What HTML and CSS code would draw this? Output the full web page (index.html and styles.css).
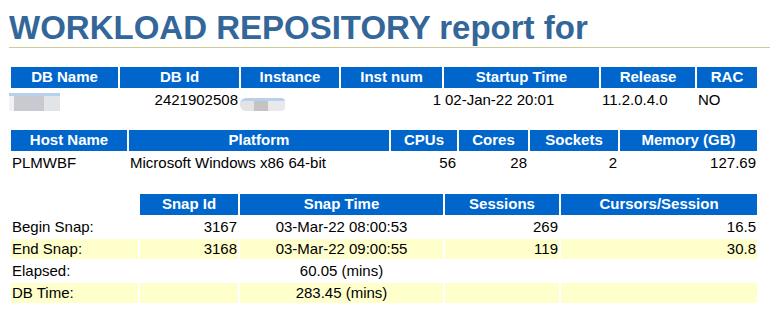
FILE: index.html
```html
<!DOCTYPE html>
<html>
<head>
  <meta charset="utf-8" />
  <title>AWR Report</title>
  <link rel="stylesheet" href="styles.css">
</head>
<body class="awr">

  <h1 class="awr">WORKLOAD REPOSITORY report for</h1>

  <table class="tdiff info">
    <tr>
      <th class="awrbg c-dbname">DB Name</th>
      <th class="awrbg c-dbid">DB Id</th>
      <th class="awrbg c-inst">Instance</th>
      <th class="awrbg c-instnum">Inst num</th>
      <th class="awrbg c-startup">Startup Time</th>
      <th class="awrbg c-release">Release</th>
      <th class="awrbg c-rac">RAC</th>
    </tr>
    <tr>
      <td class="awrnc"><span class="redact redact-db"><i></i><i></i><i></i></span>&nbsp;</td>
      <td class="awrnc num">2421902508</td>
      <td class="awrnc"><span class="redact redact-inst"><i></i><i></i><i></i></span>&nbsp;</td>
      <td class="awrnc num">1</td>
      <td class="awrnc">02-Jan-22 20:01</td>
      <td class="awrnc">11.2.0.4.0</td>
      <td class="awrnc">NO</td>
    </tr>
  </table>

  <table class="tdiff host">
    <tr>
      <th class="awrbg c-host">Host Name</th>
      <th class="awrbg c-platform">Platform</th>
      <th class="awrbg c-cpus">CPUs</th>
      <th class="awrbg c-cores">Cores</th>
      <th class="awrbg c-sockets">Sockets</th>
      <th class="awrbg c-memory">Memory (GB)</th>
    </tr>
    <tr>
      <td class="awrnc">PLMWBF</td>
      <td class="awrnc">Microsoft Windows x86 64-bit</td>
      <td class="awrnc num">56</td>
      <td class="awrnc num">28</td>
      <td class="awrnc num">2</td>
      <td class="awrnc num">127.69</td>
    </tr>
  </table>

  <table class="tdiff snaps">
    <tr>
      <th class="c-label"></th>
      <th class="awrbg c-snapid">Snap Id</th>
      <th class="awrbg c-snaptime">Snap Time</th>
      <th class="awrbg c-sessions">Sessions</th>
      <th class="awrbg c-cursors">Cursors/Session</th>
    </tr>
    <tr>
      <td class="awrnc">Begin Snap:</td>
      <td class="awrnc num">3167</td>
      <td class="awrnc mid">03-Mar-22 08:00:53</td>
      <td class="awrnc num">269</td>
      <td class="awrnc num">16.5</td>
    </tr>
    <tr>
      <td class="awrc">End Snap:</td>
      <td class="awrc num">3168</td>
      <td class="awrc mid">03-Mar-22 09:00:55</td>
      <td class="awrc num">119</td>
      <td class="awrc num">30.8</td>
    </tr>
    <tr>
      <td class="awrnc">Elapsed:</td>
      <td class="awrnc"></td>
      <td class="awrnc mid">60.05 (mins)</td>
      <td class="awrnc"></td>
      <td class="awrnc"></td>
    </tr>
    <tr>
      <td class="awrc">DB Time:</td>
      <td class="awrc"></td>
      <td class="awrc mid">283.45 (mins)</td>
      <td class="awrc"></td>
      <td class="awrc"></td>
    </tr>
  </table>

</body>
</html>
```

FILE: styles.css
```css
* {
  box-sizing: border-box;
}

body.awr {
  margin: 9px 0 0 9px;
  font: bold 15px 'Liberation Sans', Arial, Helvetica, sans-serif;
  color: black;
  background: white;
}

h1.awr {
  margin: 0;
  padding: 0 0 1px;
  font: bold 33px/37px 'Liberation Sans', Arial, Helvetica, sans-serif;
  color: #336699;
  border-bottom: 1px solid #cccc99;
}

table.tdiff {
  width: 750px;
  table-layout: fixed;
  border-spacing: 2px;
  margin-top: 17px;
}
table.host {
  margin-top: 16px;
}

th {
  padding: 1px 5px 3px;
  font: bold 15px/17px 'Liberation Sans', Arial, sans-serif;
  color: white;
  text-align: center;
  white-space: nowrap;
}
th.awrbg {
  background: #0066cc;
}

td.awrnc, td.awrc {
  position: relative;
  padding: 1px 1px;
  font: 15px/18px 'Liberation Sans', Arial, sans-serif;
  color: black;
  vertical-align: top;
  white-space: nowrap;
}
td.awrnc {
  background: white;
}
td.awrc {
  background: #ffffcc;
}
td.num {
  text-align: right;
}
td.mid {
  text-align: center;
}

/* column widths */
.c-dbname { width: 107px; }
.c-dbid { width: 119px; }
.c-inst { width: 98px; }
.c-instnum { width: 101px; }
.c-startup { width: 155px; }
.c-release { width: 94px; }
.c-rac { width: 60px; }

.c-host { width: 116px; }
.c-platform { width: 260px; }
.c-cpus { width: 66px; }
.c-cores { width: 69px; }
.c-sockets { width: 88px; }
.c-memory { width: 137px; }

.c-label { width: 127px; }
.c-snapid { width: 98px; }
.c-snaptime { width: 203px; }
.c-sessions { width: 114px; }
.c-cursors { width: 196px; }

/* blurred-out names */
.redact {
  position: absolute;
  display: flex;
  border-top: 3px solid #b8d0ec;
  filter: blur(0.6px);
}
.redact i {
  display: block;
  height: 100%;
}
.redact-db {
  left: -11px;
  top: 3px;
  width: 60px;
  height: 18px;
}
.redact-db i:nth-child(1) { width: 14px; background: #f0f2f5; }
.redact-db i:nth-child(2) { width: 30px; background: #c9c9d1; }
.redact-db i:nth-child(3) { width: 16px; background: #e2e5e8; }

.redact-inst {
  left: -1px;
  top: 8px;
  width: 45px;
  height: 13px;
  border-radius: 6px 4px 4px 6px;
  overflow: hidden;
}
.redact-inst i:nth-child(1) { width: 14px; background: #e3e3e6; }
.redact-inst i:nth-child(2) { width: 14px; background: #c4c3c2; }
.redact-inst i:nth-child(3) { width: 17px; background: #e9e9ec; }
```
